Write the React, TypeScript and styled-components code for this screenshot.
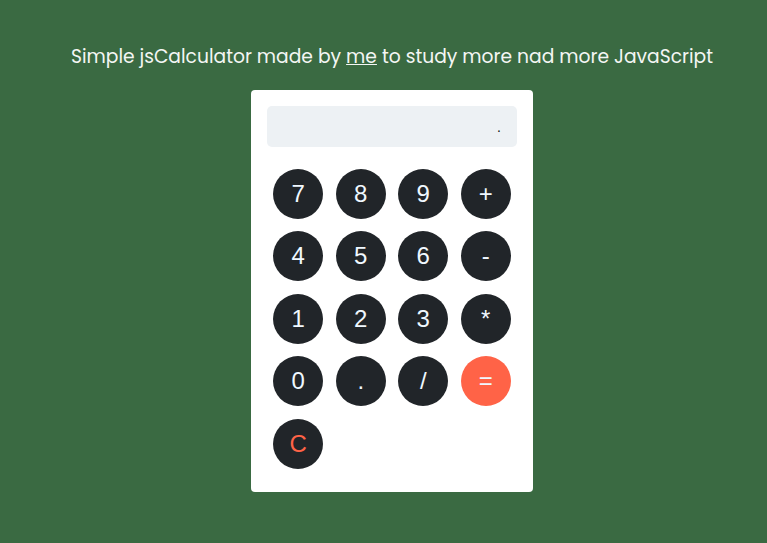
import React from "react";
import styled, { createGlobalStyle } from "styled-components";

const Global = createGlobalStyle`
  html, body { margin: 0; padding: 0; background: #3a6a42; }
  body { font-family: Poppins, "Open Sans", sans-serif; }
`;

const Page = styled.div`
  min-height: 543px;
  display: flex;
  flex-direction: column;
  align-items: center;
  padding-left: 17px;
  padding-top: 43px;
  box-sizing: border-box;
`;

const Title = styled.p`
  margin: 0 0 20px;
  color: #f4f6f4;
  font-size: 18.7px;
  line-height: 27px;
  font-family: Poppins, "Open Sans", sans-serif;
  white-space: nowrap;
  a { color: inherit; text-decoration: underline; }
`;

const Card = styled.div`
  width: 282px;
  background: #ffffff;
  border-radius: 4px;
  padding: 16px 16px 23px;
  box-sizing: border-box;
`;

const Display = styled.div`
  height: 41px;
  background: #edf1f4;
  border-radius: 5px;
  display: flex;
  align-items: center;
  justify-content: flex-end;
  padding: 0 16px;
  font-family: "Liberation Sans", Arial, sans-serif;
  font-size: 14px;
  color: #111;
  margin-bottom: 22px;
`;

const Keys = styled.div`
  display: grid;
  grid-template-columns: repeat(4, 50px);
  justify-content: space-around;
  row-gap: 12.4px;
`;

const Key = styled.button<{ $accent?: boolean; $red?: boolean }>`
  width: 50px;
  height: 50px;
  border-radius: 50%;
  border: none;
  padding: 0;
  background: ${(p) => (p.$accent ? "#ff6347" : "#212529")};
  color: ${(p) => (p.$red ? "#ff6347" : "#f0f8ff")};
  font-family: "Liberation Sans", Arial, sans-serif;
  font-size: 24px;
  display: flex;
  align-items: center;
  justify-content: center;
  cursor: pointer;
`;

const keys: { label: string; accent?: boolean; red?: boolean }[] = [
  { label: "7" }, { label: "8" }, { label: "9" }, { label: "+" },
  { label: "4" }, { label: "5" }, { label: "6" }, { label: "-" },
  { label: "1" }, { label: "2" }, { label: "3" }, { label: "*" },
  { label: "0" }, { label: "." }, { label: "/" }, { label: "=", accent: true },
  { label: "C", red: true },
];

export default function App() {
  return (
    <>
      <Global />
      <Page>
        <Title>
          Simple jsCalculator made by <a href="#">me</a> to study more nad more JavaScript
        </Title>
        <Card>
          <Display>.</Display>
          <Keys>
            {keys.map((k, i) => (
              <Key key={i} $accent={k.accent} $red={k.red}>
                {k.label}
              </Key>
            ))}
          </Keys>
        </Card>
      </Page>
    </>
  );
}
